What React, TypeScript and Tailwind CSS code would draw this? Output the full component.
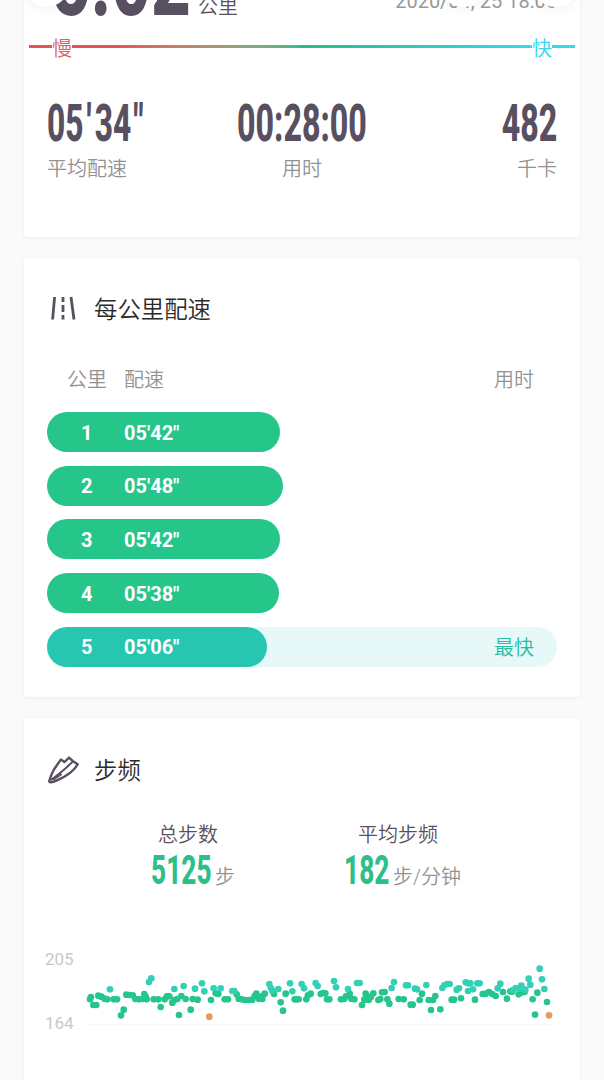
import type { ReactNode } from "react";

type Point = [number, number];

/* Samples in chart units: three units per pixel. */
const steady: Point[] = [
  [180,178],[183,171],[190,195],[199,195],[205,167],[214,170],[224,176],[232,178],[251,178],[261,178],[273,226],[281,209],
  [289,164],[298,165],[308,166],[316,177],[327,178],[338,177],[343,162],[347,170],[350,178],[371,178],[385,178],[392,201],
  [404,178],[411,169],[418,169],[427,188],[433,180],[442,177],[454,168],[467,177],[488,177],[503,179],[447,225],[482,209],
  [543,180],[557,160],[565,162],[584,178],[594,178],[620,163],[626,176],[635,178],[645,180],[656,180],[667,179],
  [674,168],[679,161],[687,177],[697,177],[696,169],[704,161],[732,162],[752,187],[759,212],[767,161],[794,178],[800,178],[806,178],
  [829,178],[834,166],[842,161],[872,162],[879,159],[886,160],[891,178],[898,178],[933,178],[942,177],[948,169],[959,161],
  [964,176],[973,178],[996,195],[1003,179],[1007,161],[1011,172],[1016,180],[1023,170],[1030,160],[1045,180],[1051,177],
  [1056,157],[1064,156],[1072,178],[1078,191],[1106,177],[1121,178],[1142,194],[1148,194],[1169,180],[1176,161],
  [1196,180],[1209,180],[1216,168],[1203,210],[1231,208],[1265,179],[1272,179],[1293,175],[1335,179],[1358,162],[1367,161],
  [1377,156],[1387,162],[1397,168],[1419,156],[1431,176],[1441,154],[1446,155],[1466,163],[1478,157],[1484,155],[1508,178],[1522,158],
  [1551,186],[1515,224],
];
const quick: Point[] = [
  [240,148],[357,126],[364,115],[433,147],[461,138],[495,146],[516,130],[523,154],[551,145],[572,145],
  [607,153],[613,153],[718,132],[723,145],[727,152],[745,147],[780,130],[787,154],[815,132],[822,145],[857,129],[863,138],
  [912,123],[918,142],[954,147],[981,129],[989,129],[1085,144],[1092,126],[1128,136],[1134,136],[1155,146],[1161,148],
  [1189,135],[1237,144],[1243,136],[1251,132],[1259,132],[1280,149],[1287,145],[1307,127],[1315,130],[1321,130],[1314,153],
  [1329,148],[1342,130],[1349,130],[1403,145],[1411,131],[1449,150],[1457,144],[1468,146],[1474,137],[1486,149],[1496,116],
  [1501,134],[1529,86],[1536,118],[1543,147],
];
const slow: Point[] = [[538,230],[1557,226]];

const laps = [
  { km: 1, pace: "05'42\"", width: "w-[233px]" },
  { km: 2, pace: "05'48\"", width: "w-[236px]" },
  { km: 3, pace: "05'42\"", width: "w-[233px]" },
  { km: 4, pace: "05'38\"", width: "w-[232px]" },
];

function Figure({ children, className }: { children: ReactNode; className: string }) {
  return (
    <span className={`block whitespace-nowrap font-[Roboto,sans-serif] font-extrabold ${className}`}>{children}</span>
  );
}

function RoadIcon() {
  return (
    <svg className="-mt-1.5 block h-[26px] w-8" viewBox="0 0 32 26" fill="none" stroke="#584f60" strokeWidth="2.8">
      <path d="M7.6 2 5.6 24.5M24 2l3 22.5M16 2v5M16 10v7M16 20v4.5" />
    </svg>
  );
}

function ShoeIcon() {
  return (
    <svg className="-mt-1 block h-[30px] w-8" viewBox="0 0 32 30" fill="none" stroke="#584f60" strokeWidth="2.4" strokeLinejoin="round" strokeLinecap="round">
      <path d="M2.3 25.8C3.5 21.5 5 17.8 7.3 14L13.8 4.6 17.5 7 22 2.6 26 6.2 30.7 9.3C27.5 15.5 21 20.5 10 25.4Q1.6 29 2.3 25.8Z" />
      <path d="M4.5 24.5Q14 18 25.6 6.8" strokeWidth="2" />
      <path d="M6.5 24.5 14 19.5" strokeWidth="2" />
    </svg>
  );
}

function Dots({ points, color }: { points: Point[]; color: string }) {
  return (
    <g fill={color}>
      {points.map(([x, y]) => (
        <circle key={`${x}-${y}`} cx={x - 45} cy={y} r="10" />
      ))}
    </g>
  );
}

export default function App() {
  return (
    <main className="relative flex h-[1080px] w-[604px] flex-col gap-[21px] overflow-hidden bg-[#fafafa] px-6 font-[Roboto,'Noto_Sans_CJK_SC',sans-serif] text-[20px] leading-[30px] font-[350] text-[#929292]">
      <section className="h-[237px] shrink-0 rounded-b bg-white shadow-[0_1px_4px_rgba(0,0,0,0.06)]">
        <div className="flex h-[31px] items-start">
          <div className="-mt-[73px] ml-[27px] h-[100px] w-[147px]">
            <Figure className="w-max origin-left scale-x-[0.69] text-[100px] leading-[107px] font-black text-[#584f60]">5.02</Figure>
          </div>
          <span className="-mt-[8px] text-[#584f60]">公里</span>
          <span className="-mt-[14px] ml-auto mr-[23px] text-[20px] font-normal whitespace-nowrap text-[#999]">2020/04, 25 18:06</span>
        </div>
        <div className="mx-[5px] flex h-[31px] items-center">
          <i className="h-[3px] w-[23px] bg-[#e85355]" />
          <span className="w-5 pt-[4px] text-[#d96060]">慢</span>
          <i className="h-[3px] flex-1 bg-linear-to-r from-[#e85355] from-10% via-[#26bd87] via-50% to-[#36d8f0]" />
          <span className="w-5 pt-[4px] text-[#35d7ec]">快</span>
          <i className="h-[3px] w-[23px] bg-[#36d8f0]" />
        </div>
        <div className="mx-[23px] mt-[32px] grid grid-cols-[190px_130px_1fr] text-[#584f60]">
          <Figure className="w-max origin-left scale-x-[0.62] text-[51px] leading-[60px]">
            05<span className="mx-[5px]">'</span>34<span className="ml-[4px] tracking-[2px]">"</span>
          </Figure>
          <Figure className="w-max origin-left scale-x-[0.63] text-[51px] leading-[60px]">00:28:00</Figure>
          <Figure className="w-max origin-right scale-x-[0.63] justify-self-end text-[51px] leading-[60px]">482</Figure>
        </div>
        <div className="mx-[23px] flex justify-between">
          <span className="w-[190px]">平均配速</span><span>用时</span><span className="w-[190px] text-right">千卡</span>
        </div>
      </section>

      <section className="h-[439px] shrink-0 rounded bg-white px-[23px] shadow-[0_1px_4px_rgba(0,0,0,0.06)]">
        <header className="flex items-center gap-[15px] pt-[35px] text-[23.4px] leading-[35px] text-[#2b2b2b]">
          <RoadIcon /><h2>每公里配速</h2>
        </header>
        <div className="mt-[37px] flex pl-5 pr-[23px]">
          <span className="w-[57px]">公里</span><span>配速</span><span className="ml-auto">用时</span>
        </div>
        <div className="mt-[17px] flex flex-col gap-[13.7px] font-bold text-white">
          {laps.map((lap) => (
            <div key={lap.km} className={`flex h-10 items-center rounded-full bg-[#26c68a] ${lap.width}`}>
              <span className="w-[77px] pl-[34px] pt-px">{lap.km}</span><span className="pt-px">{lap.pace}</span>
            </div>
          ))}
          <div className="flex h-10 items-center justify-between rounded-full bg-[#e6f8f7] pr-[23px]">
            <div className="flex h-10 w-[220px] items-center rounded-full bg-[#26c6b0]">
              <span className="w-[77px] pl-[34px] pt-px">5</span><span className="pt-px">05'06"</span>
            </div>
            <span className="pt-[3px] font-[350] text-[#28bea5]">最快</span>
          </div>
        </div>
      </section>

      <section className="h-[370px] shrink-0 rounded-t bg-white shadow-[0_1px_4px_rgba(0,0,0,0.06)]">
        <header className="mx-[23px] flex items-center gap-[15px] pt-[36px] text-[23.4px] leading-[35px] text-[#2b2b2b]">
          <ShoeIcon /><h2>步频</h2>
        </header>
        <div className="flex justify-center gap-[94px] pt-[31px] pr-[18px] text-[#584f60]">
          <div className="w-[116px] text-center">
            <p>总步数</p>
            <div className="ml-[21px] flex h-10 items-center">
              <span className="w-[64px]"><Figure className="w-max origin-left scale-x-[0.64] text-[41px] leading-[44px] text-[#2cc088]">5125</Figure></span>
              <span className="pt-[13px] text-[#929292]">步</span>
            </div>
          </div>
          <div className="w-[116px] text-center">
            <p>平均步频</p>
            <div className="ml-[4px] flex h-10 items-center">
              <span className="w-[49px] shrink-0"><Figure className="w-max origin-left scale-x-[0.64] text-[41px] leading-[44px] text-[#2cc088]">182</Figure></span>
              <span className="pt-[13px] whitespace-nowrap text-[#929292]">步/分钟</span>
            </div>
          </div>
        </div>
        <div className="mt-[50px] ml-[21px] flex text-[17px] leading-5 font-normal text-[#c8c8c8]">
          <div className="flex h-[93px] w-0 flex-col justify-between pt-[9px]">
            <span>205</span><span>164</span>
          </div>
          <svg className="h-[100px] w-[520px]" viewBox="0 0 1560 300">
            <path d="M128 254H1515" stroke="#f5f5f5" strokeWidth="3" />
            <Dots points={steady} color="#26c58c" />
            <Dots points={quick} color="#33d0b5" />
            <Dots points={slow} color="#e79b5b" />
          </svg>
        </div>
      </section>

      <span className="absolute -top-[41px] left-[22px] size-12 rounded-full bg-white shadow-[0_2px_12px_rgba(0,0,0,0.06)]" />
      <span className="absolute -top-[41px] left-[439px] size-12 rounded-full bg-white shadow-[0_2px_12px_rgba(0,0,0,0.06)]" />
      <span className="absolute -top-[41px] left-[532px] size-12 rounded-full bg-white shadow-[0_2px_12px_rgba(0,0,0,0.06)]" />
    </main>
  );
}
